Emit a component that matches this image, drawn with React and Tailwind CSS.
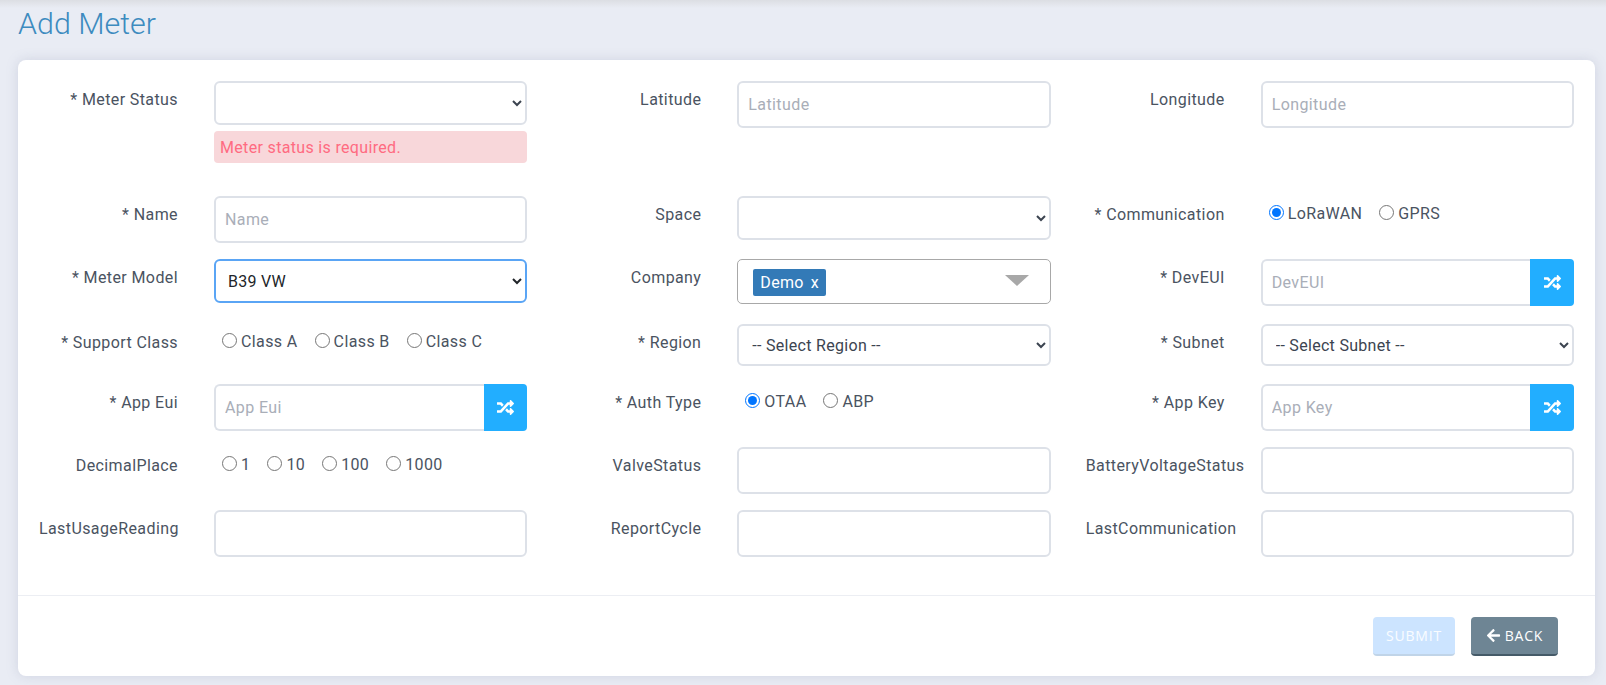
import React from "react";
import { FaRandom, FaArrowLeft } from "react-icons/fa";

const inputCls =
  "w-full border-2 border-[#dde1e8] rounded-[6px] bg-white px-[9px] text-[16px] tracking-[0.4px] text-[#495057] outline-none placeholder:text-[#a9aeb8] h-[47px]";
const selectCls =
  "w-full border-2 border-[#dde1e8] rounded-[6px] bg-white pl-[9px] pr-[2px] text-[16px] tracking-[0.3px] text-[#3c4450] outline-none";

const Field = ({ label, children }) => (
  <div className="grid grid-cols-[140px_1fr] gap-x-[35px] items-start">
    <label className="text-right text-[16px] tracking-[0.4px] leading-[24px] text-[#4a5361] whitespace-nowrap pt-[7px] pr-[1px]">
      {label}
    </label>
    <div className="min-w-0">{children}</div>
  </div>
);

const TextInput = ({ placeholder }) => <input className={inputCls} placeholder={placeholder} />;

const Select = ({ value, focus, short }) => (
  <select
    className={
      focus
        ? "w-full h-[44px] border-2 border-[#5aa5f5] rounded-[6px] bg-white pl-[8px] pr-[2px] text-[16px] tracking-[0.3px] text-[#212529] outline-none"
        : selectCls + (short ? " h-[42px]" : " h-[44px]")
    }
    defaultValue={value || ""}
  >
    <option value={value || ""}>{value || ""}</option>
  </select>
);

const ShuffleInput = ({ placeholder, narrow }) => (
  <div className="flex h-[47px]">
    <input
      className="flex-1 min-w-0 border-2 border-r-0 border-[#dde1e8] rounded-l-[6px] bg-white px-[9px] text-[16px] tracking-[0.4px] outline-none placeholder:text-[#a9aeb8]"
      placeholder={placeholder}
    />
    <button
      className={
        narrow
          ? "w-[43px] flex items-center justify-center bg-[#22aeff] rounded-r-[4px] text-white text-[17px]"
          : "w-[44px] flex items-center justify-center bg-[#22aeff] rounded-r-[4px] text-white text-[17px]"
      }
    >
      <FaRandom />
    </button>
  </div>
);

const Radios = ({ name, items, checked }) => (
  <div className="flex gap-[17px] pl-[8px] pt-[5px] h-[30px] items-center text-[16px] tracking-[0.38px] text-[#4a5361]">
    {items.map((item) => (
      <label key={item} className="flex items-center">
        <input
          type="radio"
          name={name}
          defaultChecked={item === checked}
          className="w-[15px] h-[15px] m-0 mr-[4px] -mt-[2px]"
        />
        {item}
      </label>
    ))}
  </div>
);

const App = () => {
  return (
    <div className="h-[685px] overflow-hidden bg-[#e9ecf4] font-['Roboto',sans-serif]">
      <div className="h-[8px] bg-gradient-to-b from-[#dcdee3] to-[#e9ecf4]" />
      <h1 className="ml-[18px] h-[52px] text-[30.4px] leading-[32px] font-light text-[#3d8bbf]">
        Add Meter
      </h1>
      <div className="mx-[18px] w-[1577px] h-[616px] bg-white rounded-[8px] shadow-[0_0_12px_rgba(130,140,170,0.25)] flex flex-col">
        <div className="flex-1 px-[21px] pt-[21px]">
          <div className="grid grid-cols-3 gap-x-[35px] grid-rows-[115px_63px_65px_60px_63px_63px_46px]">
            <Field label="* Meter Status">
              <Select />
              <div className="mt-[6px] h-[32px] bg-[#f8d7da] rounded-[4px] px-[6px] text-[16px] tracking-[0.33px] leading-[33px] text-[#ff6b81]">
                Meter status is required.
              </div>
            </Field>
            <Field label="Latitude"><TextInput placeholder="Latitude" /></Field>
            <Field label="Longitude"><TextInput placeholder="Longitude" /></Field>

            <Field label="* Name"><TextInput placeholder="Name" /></Field>
            <Field label="Space"><Select /></Field>
            <Field label="* Communication">
              <Radios name="comm" items={["LoRaWAN", "GPRS"]} checked="LoRaWAN" />
            </Field>

            <Field label="* Meter Model"><Select value="B39 VW" focus /></Field>
            <Field label="Company">
              <div className="relative h-[45px] border border-[#a8a8a8] rounded-[5px] bg-white pl-[15px] pt-[9px]">
                <span className="inline-flex h-[27px] items-center gap-[7px] bg-[#337ab7] rounded-[2px] px-[7px] text-[16px] tracking-[0.33px] text-white">
                  <span>Demo</span>
                  <span>x</span>
                </span>
                <span className="absolute right-[21px] top-[15px] border-x-[12px] border-x-transparent border-t-[11px] border-t-[#a8a8a8]" />
              </div>
            </Field>
            <Field label="* DevEUI"><ShuffleInput placeholder="DevEUI" /></Field>

            <Field label="* Support Class">
              <Radios name="cls" items={["Class A", "Class B", "Class C"]} />
            </Field>
            <Field label="* Region"><Select value="-- Select Region --" short /></Field>
            <Field label="* Subnet"><Select value="-- Select Subnet --" short /></Field>

            <Field label="* App Eui"><ShuffleInput placeholder="App Eui" narrow /></Field>
            <Field label="* Auth Type">
              <Radios name="auth" items={["OTAA", "ABP"]} checked="OTAA" />
            </Field>
            <Field label="* App Key"><ShuffleInput placeholder="App Key" /></Field>

            <Field label="DecimalPlace">
              <Radios name="dec" items={["1", "10", "100", "1000"]} />
            </Field>
            <Field label="ValveStatus"><TextInput /></Field>
            <Field label="BatteryVoltageStatus"><TextInput /></Field>

            <Field label="LastUsageReading"><TextInput /></Field>
            <Field label="ReportCycle"><TextInput /></Field>
            <Field label="LastCommunication"><TextInput /></Field>
          </div>
        </div>
        <div className="h-[81px] border-t border-[#eceef3] flex justify-end gap-[16px] pt-[21px] pr-[37px] font-['Open_Sans',sans-serif] text-[14px]">
          <button className="h-[39px] w-[82px] bg-[#cce4ff] border-b-2 border-[#c0d4e8] rounded-[4px] text-white/90 tracking-[0.8px]">
            SUBMIT
          </button>
          <button className="h-[39px] w-[87px] bg-[#6e8594] border-b-2 border-[#455a68] rounded-[4px] text-white tracking-[0.8px] flex items-center justify-center gap-[4px]">
            <FaArrowLeft className="text-[15px]" />
            BACK
          </button>
        </div>
      </div>
    </div>
  );
};

export default App;
